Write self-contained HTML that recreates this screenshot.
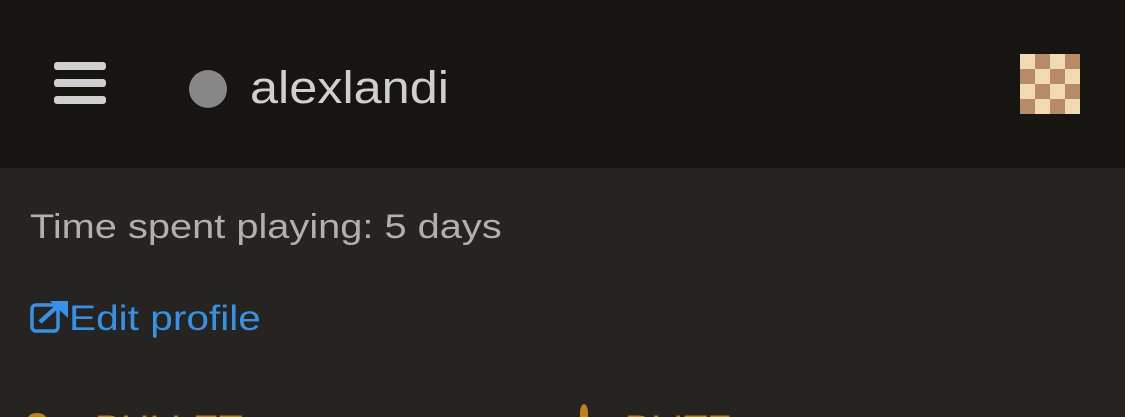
<!DOCTYPE html>
<html><head><meta charset="utf-8"><style>
html,body{margin:0;width:1125px;height:417px;overflow:hidden}
body{background:#262421;font-family:"Liberation Sans","DejaVu Sans",sans-serif;position:relative}
.hdr{position:absolute;left:0;top:0;width:1125px;height:168px;background:#161512}
.bar{position:absolute;left:54px;width:52px;height:8px;border-radius:3px;background:#cfcfcf}
.abs{position:absolute;white-space:nowrap;transform-origin:0 0}
.cb{position:absolute;left:1020px;top:54px;width:60px;height:60px;display:grid;grid-template-columns:repeat(4,15px)}
.l{background:#f0dab1}.d{background:#b78b66}
.clip{position:absolute;left:0;top:380px;width:1125px;height:37px;overflow:hidden}
</style></head><body>
<div class="hdr">
<div class="bar" style="top:62px"></div>
<div class="bar" style="top:79px"></div>
<div class="bar" style="top:96px"></div>
<div class="abs" style="left:189px;top:70px;width:38px;height:38px;border-radius:50%;background:#878787"></div>
<div class="abs" style="left:250px;top:58px;font-size:45px;color:#cfcfcf;line-height:60px;transform:scaleX(1.12)">alexlandi</div>
<div class="cb"><i class="l"></i><i class="d"></i><i class="l"></i><i class="d"></i><i class="d"></i><i class="l"></i><i class="d"></i><i class="l"></i><i class="l"></i><i class="d"></i><i class="l"></i><i class="d"></i><i class="d"></i><i class="l"></i><i class="d"></i><i class="l"></i></div>
</div>
<div class="abs" style="left:30px;top:206px;font-size:34px;color:#b0b0b0;line-height:42px;transform:scaleX(1.17)">Time spent playing: 5 days</div>
<svg class="abs" style="left:30px;top:300px" width="40" height="34" viewBox="0 0 40 34"><rect x="2" y="5" width="26" height="26" rx="4" fill="none" stroke="#3692e7" stroke-width="3.5"/><path d="M10 22 L30 4" stroke="#3692e7" stroke-width="4.5"/><path d="M22 0 L40 0 L40 17 Z" fill="#3692e7" transform="translate(-2,1)"/></svg>
<div class="abs" style="left:69px;top:298px;font-size:35px;color:#3692e7;line-height:42px;transform:scaleX(1.16)">Edit profile</div>
<div class="clip">
<div class="abs" style="left:95px;top:28px;font-size:34px;color:#bf811d;line-height:40px;transform:scaleX(1.15)">BULLET</div>
<div class="abs" style="left:625px;top:28px;font-size:34px;color:#bf811d;line-height:40px;transform:scaleX(1.15)">BLITZ</div>
<div class="abs" style="left:28px;top:33px;width:18px;height:10px;border-radius:50%;background:#bf811d"></div>
<div class="abs" style="left:580px;top:24px;width:8px;height:18px;border-radius:50% 50% 0 0;background:#bf811d"></div>
</div>
</body></html>
